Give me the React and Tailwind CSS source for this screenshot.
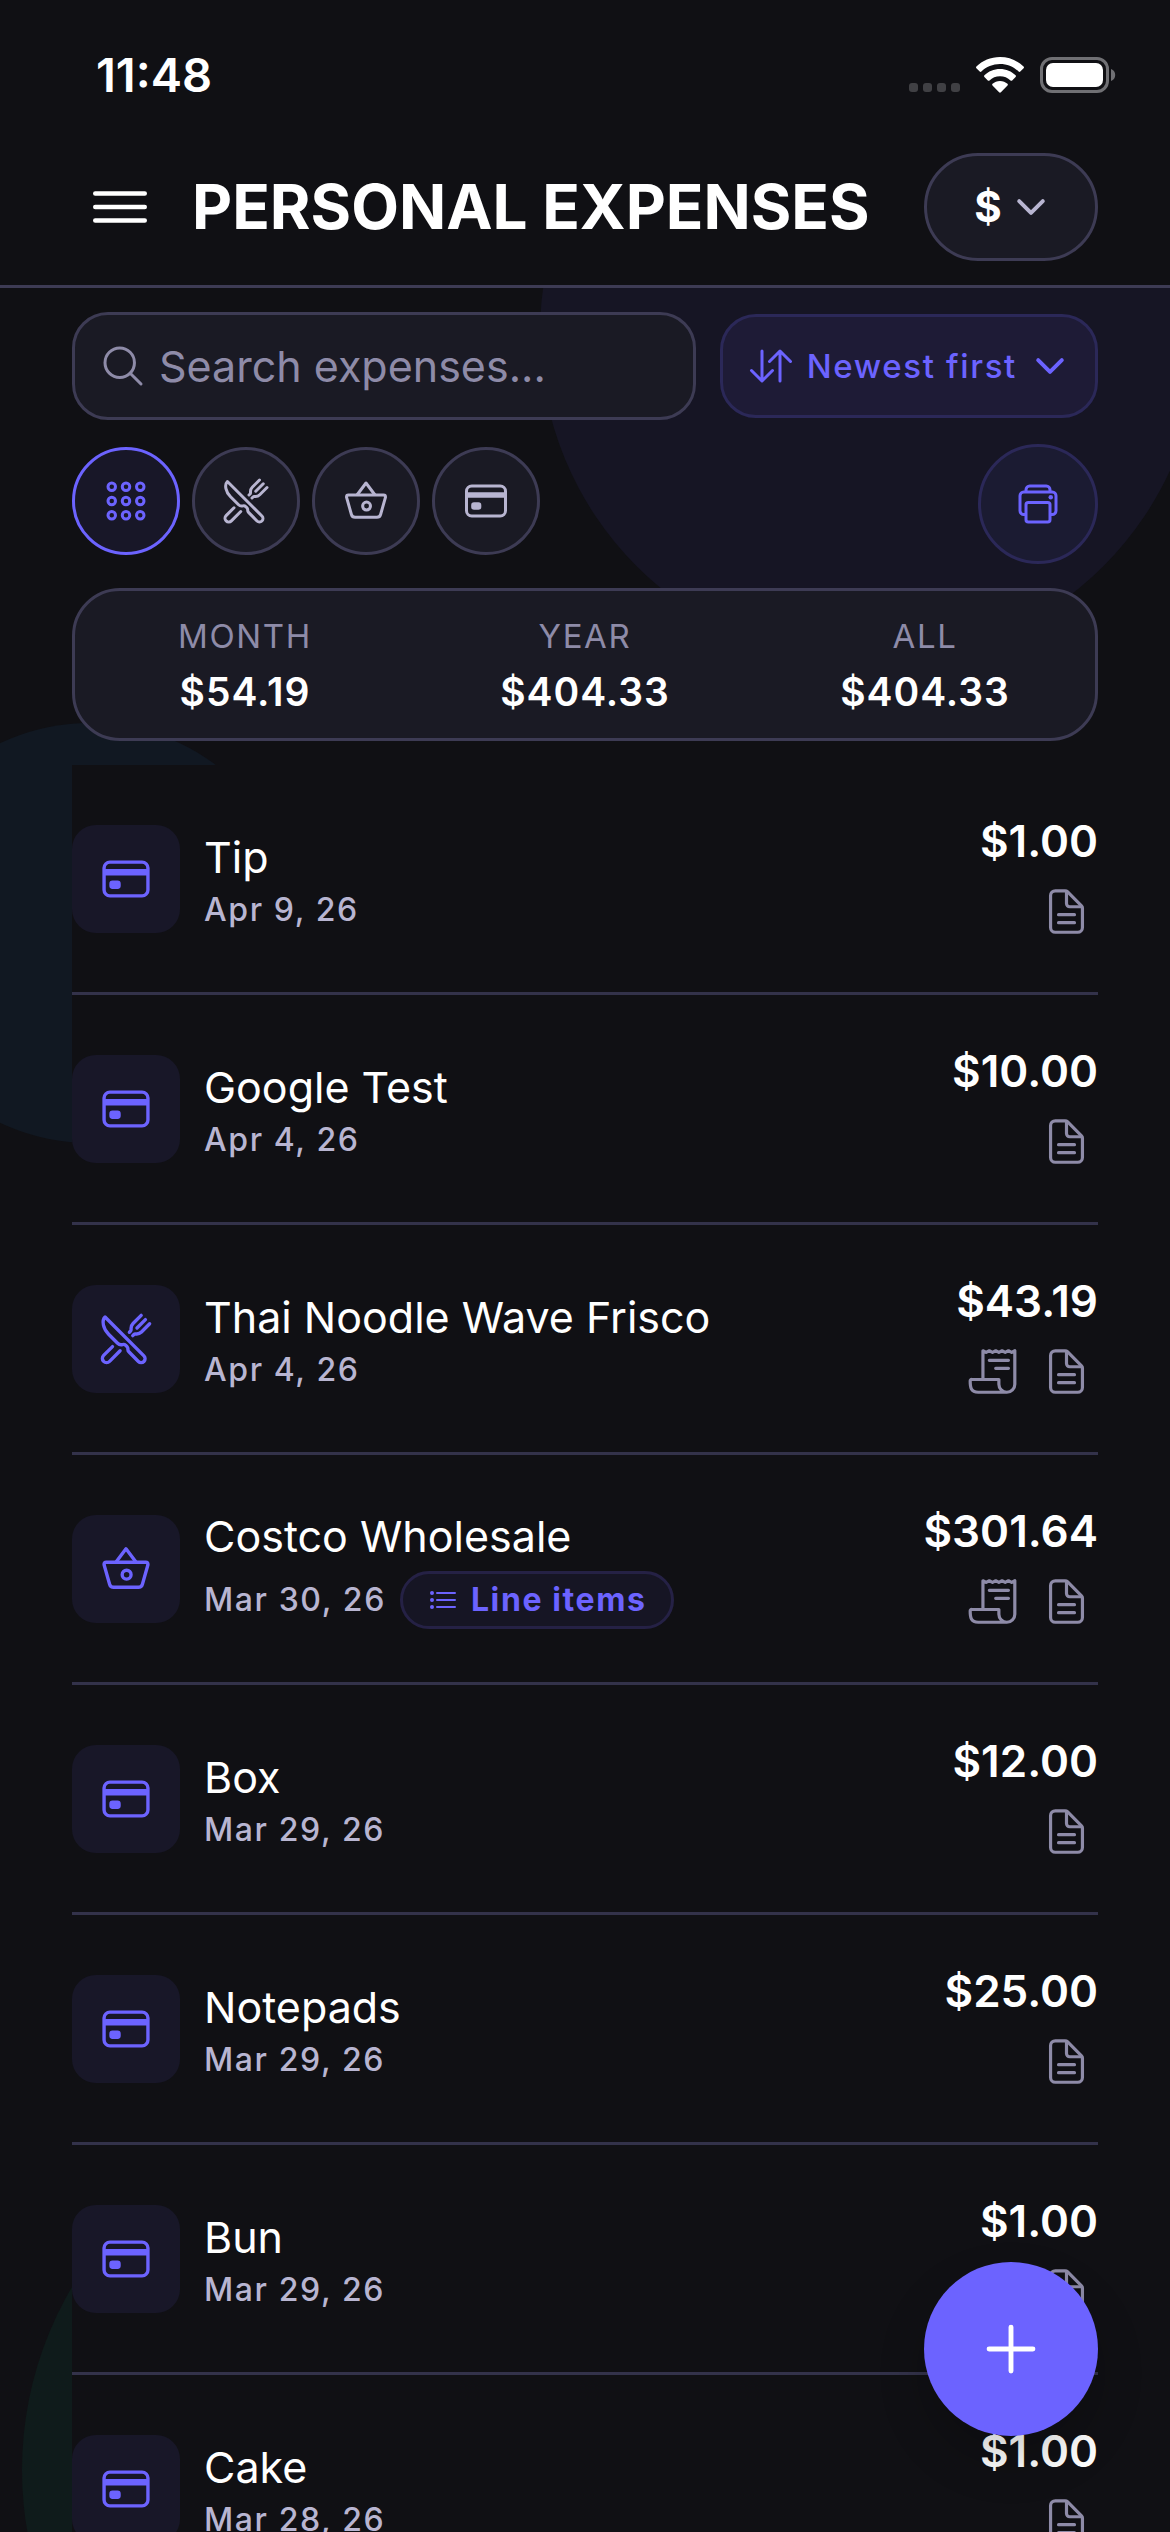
import { useState } from "react";
import {
  IoAdd,
  IoAppsOutline,
  IoBasketOutline,
  IoCardOutline,
  IoChevronDown,
  IoDocumentTextOutline,
  IoListOutline,
  IoMenuOutline,
  IoPrintOutline,
  IoReceiptOutline,
  IoRestaurantOutline,
  IoSearchOutline,
  IoSwapVerticalOutline,
} from "react-icons/io5";

const categories = [
  { id: "all", label: "All categories", icon: IoAppsOutline },
  { id: "dining", label: "Dining", icon: IoRestaurantOutline },
  { id: "groceries", label: "Groceries", icon: IoBasketOutline },
  { id: "card", label: "Purchases", icon: IoCardOutline },
];

const categoryIcons = {
  dining: IoRestaurantOutline,
  groceries: IoBasketOutline,
  card: IoCardOutline,
};

const totals = [
  { label: "MONTH", value: "$54.19" },
  { label: "YEAR", value: "$404.33" },
  { label: "ALL", value: "$404.33" },
];

const expenses = [
  { id: 1, name: "Tip", date: "Apr 9, 26", amount: "$1.00", category: "card" },
  { id: 2, name: "Google Test", date: "Apr 4, 26", amount: "$10.00", category: "card" },
  {
    id: 3,
    name: "Thai Noodle Wave Frisco",
    date: "Apr 4, 26",
    amount: "$43.19",
    category: "dining",
    receipt: true,
  },
  {
    id: 4,
    name: "Costco Wholesale",
    date: "Mar 30, 26",
    amount: "$301.64",
    category: "groceries",
    receipt: true,
    lineItems: true,
  },
  { id: 5, name: "Box", date: "Mar 29, 26", amount: "$12.00", category: "card" },
  { id: 6, name: "Notepads", date: "Mar 29, 26", amount: "$25.00", category: "card" },
  { id: 7, name: "Bun", date: "Mar 29, 26", amount: "$1.00", category: "card" },
  { id: 8, name: "Cake", date: "Mar 28, 26", amount: "$1.00", category: "card" },
];

const StatusBar = () => (
  <div className="flex h-[141px] items-center justify-between pt-2 pr-[54px] pl-24 text-white">
    <span className="text-[47px] leading-[54px] font-semibold">11:48</span>
    <div className="flex items-center gap-4">
      <div className="flex gap-[5px] self-end pb-[1px]">
        {[0, 1, 2, 3].map((dot) => (
          <span key={dot} className="size-[9px] rounded-[3px] bg-[#404044]" />
        ))}
      </div>
      <svg className="h-9 w-12" viewBox="0 0 48 36" fill="currentColor" aria-hidden="true">
        <path d="M24 0C33.300 0 41.700 3.700 47.600 9.600c.5.500.5 1.200 0 1.700l-3.300 3.300c-.4.500-1.200.5-1.700 0C37.800 9.900 31.200 7.100 24 7.100S10.200 9.900 5.400 14.600c-.5.5-1.300.5-1.700 0L.4 11.300c-.5-.5-.5-1.200 0-1.700C6.300 3.700 14.700 0 24 0z" />
        <path d="M24 12c6.100 0 11.600 2.400 15.600 6.300.5.5.5 1.200 0 1.700l-3.400 3.400c-.5.4-1.200.4-1.700 0-2.700-2.600-6.400-4.200-10.500-4.200s-7.800 1.600-10.500 4.200c-.5.4-1.200.4-1.700 0L8.400 20c-.5-.5-.5-1.200 0-1.700C12.400 14.400 17.900 12 24 12z" />
        <path d="M24 24c2.900 0 5.500 1.100 7.500 2.800.5.500.5 1.200 0 1.700l-6.600 6.800c-.5.500-1.300.5-1.800 0l-6.600-6.800c-.5-.5-.5-1.200 0-1.700 2-1.700 4.600-2.800 7.500-2.800z" />
      </svg>
      <svg className="h-9 w-[76px]" viewBox="0 0 76 36" aria-hidden="true">
        <rect x="1.500" y="1.500" width="66" height="33" rx="10.500" fill="none" stroke="#707074" strokeWidth="3" />
        <rect x="6" y="6" width="57" height="24" rx="7" fill="#fff" />
        <path d="M71 12c2.700 1 4.200 3.300 4.200 6S73.700 23 71 24z" fill="#707074" />
      </svg>
    </div>
  </div>
);

const Header = () => (
  <header className="relative border-b-3 border-[#3d3b54] bg-[#101014]">
    <StatusBar />
    <div className="flex items-center px-[72px] pt-3 pb-6">
      <button type="button" aria-label="Open menu" className="ml-3 shrink-0 text-white">
        <IoMenuOutline className="size-[72px]" />
      </button>
      <h1 className="ml-9 flex-1 text-[62px] leading-[78px] font-bold whitespace-nowrap text-white">
        PERSONAL EXPENSES
      </h1>
      <div className="flex h-[108px] w-[174px] shrink-0 items-center justify-center gap-2 rounded-full border-3 border-[#3d3b54] bg-[#1a1a24] pl-1 text-white">
        <select
          aria-label="Currency"
          className="field-sizing-content appearance-none bg-transparent text-[42px] leading-[54px] font-bold outline-none"
        >
          <option>$</option>
          <option>€</option>
          <option>£</option>
        </select>
        <IoChevronDown className="size-[42px] text-[#b8b5d1]" />
      </div>
    </div>
  </header>
);

const SearchRow = () => {
  const [query, setQuery] = useState("");

  return (
    <div className="flex items-center gap-6">
      <div className="flex h-[108px] min-w-0 flex-1 items-center gap-3 rounded-[36px] border-3 border-[#3d3b54] bg-[#1a1a24] px-6">
        <IoSearchOutline className="size-12 shrink-0 text-[#8e8ba8]" />
        <input
          type="text"
          aria-label="Search expenses"
          value={query}
          onChange={(e) => setQuery(e.target.value)}
          placeholder="Search expenses..."
          className="w-full min-w-0 bg-transparent text-[43px] leading-[54px] text-white outline-none placeholder:text-[#8e8ba8]"
        />
      </div>
      <div className="flex h-[104px] shrink-0 items-center gap-3 rounded-[36px] border-3 border-[#2b2858] bg-[#1e1b36] px-6 text-[#6c63ff]">
        <IoSwapVerticalOutline className="size-12" />
        <select
          aria-label="Sort order"
          className="field-sizing-content appearance-none bg-transparent text-[33px] leading-[42px] font-medium tracking-wider outline-none"
        >
          <option>Newest first</option>
          <option>Oldest first</option>
          <option>Highest amount</option>
        </select>
        <IoChevronDown className="size-[42px]" />
      </div>
    </div>
  );
};

const FilterRow = () => {
  const [active, setActive] = useState("all");

  return (
    <div className="flex items-start justify-between">
      <div className="flex gap-3 pt-[3px]">
        {categories.map(({ id, label, icon: Icon }) => (
          <button
            key={id}
            type="button"
            aria-label={label}
            aria-pressed={active === id}
            onClick={() => setActive(id)}
            className={`flex size-[108px] items-center justify-center rounded-full border-3 ${
              active === id
                ? "border-[#6c63ff] bg-[#181728] text-[#6c63ff]"
                : "border-[#3d3b54] bg-[#1a1a24] text-[#b8b5d1]"
            }`}
          >
            <Icon className="size-12" />
          </button>
        ))}
      </div>
      <button
        type="button"
        aria-label="Print expenses"
        className="flex size-[120px] items-center justify-center rounded-full border-3 border-[#2b2858] bg-[#1b1b32] text-[#6c63ff]"
      >
        <IoPrintOutline className="size-12" />
      </button>
    </div>
  );
};

const Totals = () => (
  <dl className="grid grid-cols-3 rounded-[48px] border-3 border-[#3d3b54] bg-[#1a1a24] pt-[26px] pb-[22px] text-center">
    {totals.map((total) => (
      <div key={total.label} className="flex flex-col gap-3">
        <dt className="text-[33px] leading-[39px] tracking-wider text-[#8e8ba8]">{total.label}</dt>
        <dd className="text-[39px] leading-[48px] font-semibold tracking-wide text-white">{total.value}</dd>
      </div>
    ))}
  </dl>
);

const ExpenseRow = ({ expense }) => {
  const Icon = categoryIcons[expense.category];

  return (
    <li className="flex h-[230px] shrink-0 items-center gap-6 border-b-3 border-[#33324a]">
      <div className="flex size-[108px] shrink-0 items-center justify-center rounded-3xl bg-[#181728] text-[#6c63ff]">
        <Icon className="size-[54px]" />
      </div>
      <div className="flex min-w-0 flex-1 flex-col gap-2">
        <h2 className="truncate text-[43px] leading-[54px] text-white">{expense.name}</h2>
        <div className="flex items-center gap-3.5">
          <span className="text-[32px] leading-[36px] font-medium tracking-wider text-[#b8b5d1]">
            {expense.date}
          </span>
          {expense.lineItems && (
            <button
              type="button"
              className="flex h-[58px] items-center gap-3 rounded-full border-3 border-[#252145] bg-[#161524] px-6 text-[32px] leading-[36px] font-bold tracking-wider text-[#6c63ff]"
            >
              <IoListOutline className="size-8" />
              Line items
            </button>
          )}
        </div>
      </div>
      <div className="flex shrink-0 flex-col items-end gap-3">
        <span className="text-[44px] leading-[54px] font-semibold text-white">{expense.amount}</span>
        <div className="flex gap-[10px] text-[#8e8ba8]">
          {expense.receipt && (
            <button type="button" aria-label="View receipt" className="flex size-16 items-center justify-center">
              <IoReceiptOutline className="size-[51px]" />
            </button>
          )}
          <button type="button" aria-label="View notes" className="flex size-16 items-center justify-center">
            <IoDocumentTextOutline className="size-[51px]" />
          </button>
        </div>
      </div>
    </li>
  );
};

const App = () => {
  return (
    <div className="relative flex h-screen flex-col overflow-hidden bg-[#101014] font-[Inter,sans-serif]">
      {/* Background blobs */}
      <div className="absolute top-[3px] -right-[30px] size-[660px] rounded-full bg-[#161524]" />
      <div className="absolute top-[723px] -left-[120px] size-[420px] rounded-full bg-[#111822]" />
      <div className="absolute -bottom-[298px] left-[22px] size-[720px] rounded-full bg-[#0f1b1b]" />

      <Header />

      <main className="relative flex min-h-0 flex-1 flex-col gap-6 px-[72px] pt-6">
        <SearchRow />
        <FilterRow />
        <Totals />
        <ul className="flex min-h-0 flex-1 flex-col overflow-y-auto bg-[#101014] [scrollbar-width:none]">
          {expenses.map((expense) => (
            <ExpenseRow key={expense.id} expense={expense} />
          ))}
        </ul>
      </main>

      {/* Add expense */}
      <button
        type="button"
        aria-label="Add expense"
        className="absolute right-[72px] bottom-24 flex size-[174px] items-center justify-center rounded-full bg-[#6c63ff] text-white shadow-[0_24px_48px_rgba(0,0,0,0.2)]"
      >
        <IoAdd className="size-[78px]" />
      </button>
    </div>
  );
};

export default App;
